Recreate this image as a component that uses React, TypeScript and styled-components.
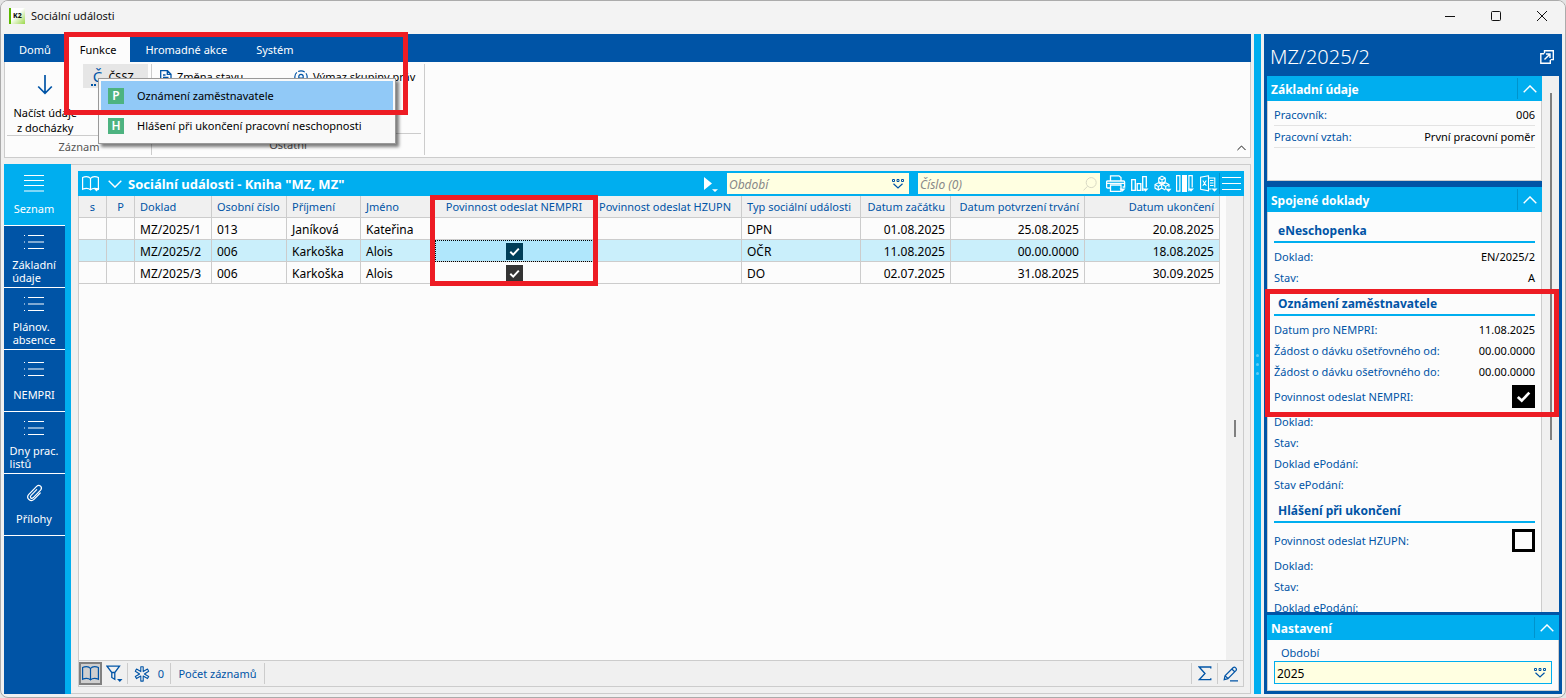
import React from "react";
import styled, { createGlobalStyle, css } from "styled-components";

const NAVY = "#0054a6";
const CYAN = "#00aeef";
const PAPER = "#fcfcfc";
const CHROME = "#f0f0f0";
const LINE = "#cccccc";
const CREAM = "#ffffe1";
const RED = "#ed1c24";

const Global = createGlobalStyle`
  *, *::before, *::after { box-sizing: border-box; }
  body { margin: 0; background: #e4e4e4; }
  body, button, input { font-family: "Noto Sans", "Open Sans", sans-serif; font-size: 11px; line-height: 16px; }
  button { margin: 0; padding: 0; border: 0; background: none; color: inherit; cursor: default; }
  svg { display: block; fill: none; stroke: currentColor; flex: none; }
`;

/* ---------- window frame ---------- */

const Window = styled.div`
  display: flex;
  flex-direction: column;
  height: 100vh;
  border: 1px solid #ababab;
  border-radius: 8px;
  background: ${CHROME};
  overflow: hidden;
`;

const TitleBar = styled.header`
  display: flex;
  align-items: center;
  flex: none;
  height: 33px;
  padding: 0 0 4px 8px;
  background: #f3f3f3;
  color: #111;
`;

const AppTitle = styled.h1`
  flex: 1;
  margin: 0 0 0 6px;
  font-size: 11px;
  font-weight: 400;
`;

const WindowButton = styled.button`
  display: grid;
  place-items: center;
  width: 46px;
  height: 28px;
`;

const Body = styled.div`
  display: flex;
  flex: 1;
  gap: 3px;
  min-height: 0;
  padding: 0 3px 3px;
`;

const Main = styled.div`
  display: flex;
  flex-direction: column;
  flex: 1;
  min-width: 0;
`;

const Splitter = styled.div`
  display: flex;
  flex-direction: column;
  align-items: center;
  justify-content: center;
  gap: 6px;
  width: 7px;
  background: ${CYAN};
`;

const SplitterDot = styled.span`
  width: 3px;
  height: 3px;
  border-radius: 50%;
  background: #5fcbf5;
`;

const Highlight = styled.div`
  position: absolute;
  z-index: 5;
  border: 5px solid ${RED};
  pointer-events: none;
`;

/* ---------- ribbon ---------- */

const Ribbon = styled.section`
  position: relative;
  flex: none;
`;

const RibbonMark = styled(Highlight)`
  top: -2px;
  left: 60px;
  width: 344px;
  height: 83px;
`;

const Tabs = styled.nav`
  display: flex;
  height: 28px;
  background: ${NAVY};
  color: #fff;
`;

const Tab = styled.button<{ $active?: boolean }>`
  padding: 4px 14px 0 15px;
  ${(p) => p.$active && css`background: ${PAPER}; color: #000;`}
`;

const RibbonBody = styled.div`
  display: flex;
  height: 96px;
  border: 1px solid ${LINE};
  border-top: 0;
  background: ${PAPER};
  padding: 2px 0 2px 2px;
`;

const RibbonGroup = styled.div<{ $width: number }>`
  display: flex;
  flex-direction: column;
  flex: none;
  width: ${(p) => p.$width}px;
  border-right: 1px solid ${LINE};
`;

const GroupTools = styled.div`
  display: flex;
  align-items: flex-start;
  flex: 1;
  margin: 0 3px 0 0;
  border-bottom: 1px solid ${LINE};
`;

const GroupLabel = styled.div`
  height: 21px;
  color: #555;
  line-height: 21px;
  text-align: center;
`;

const BigTool = styled.button`
  display: flex;
  flex-direction: column;
  align-items: center;
  gap: 10px;
  width: 77px;
  padding-top: 11px;
  line-height: 15px;
  white-space: nowrap;
`;

const SmallTool = styled.button<{ $hot?: boolean; $width: number }>`
  display: flex;
  align-items: center;
  gap: 5px;
  width: ${(p) => p.$width}px;
  height: 24px;
  padding: 1px 0 0 8px;
  background: ${(p) => (p.$hot ? "#e6e6e6" : "none")};
  white-space: nowrap;
`;

const LetterIcon = styled.span`
  width: 12px;
  border-bottom: 2px dotted ${NAVY};
  color: ${NAVY};
  font-size: 15px;
  line-height: 16px;
`;

const CollapseButton = styled.button`
  align-self: flex-end;
  margin: 0 4px 4px auto;
`;

const Menu = styled.ul`
  position: absolute;
  top: 44px;
  left: 94px;
  z-index: 4;
  width: 298px;
  margin: 0;
  padding: 2px;
  border: 1px solid #999;
  background: #f9f9f9;
  box-shadow: 3px 3px 3px rgba(0, 0, 0, 0.5);
  list-style: none;
`;

const MenuItem = styled.button<{ $active?: boolean }>`
  display: flex;
  align-items: center;
  gap: 13px;
  width: 100%;
  height: 30px;
  padding-left: 7px;
  background: ${(p) => (p.$active ? "#91c9f7" : "none")};
  white-space: nowrap;
`;

const MenuBadge = styled.span`
  width: 16px;
  height: 16px;
  background: #4db380;
  color: #fff;
  font-size: 12px;
  font-weight: 600;
  text-align: center;
`;

/* ---------- page with sidebar ---------- */

const Page = styled.div`
  display: flex;
  flex: 1;
  min-height: 0;
  margin-top: 6px;
`;

const Sidebar = styled.nav`
  flex: none;
  width: 67px;
  border-right: 6px solid ${CYAN};
  background: ${NAVY};
`;

const SideItem = styled.button<{ $active?: boolean; $lines: number }>`
  display: grid;
  grid-template-rows: 1fr auto;
  place-items: center;
  width: 61px;
  height: 62px;
  padding: 0 1px ${(p) => (p.$lines > 1 ? 3 : 10)}px 0;
  border-bottom: 1px solid #fff;
  background: ${(p) => (p.$active ? CYAN : NAVY)};
  color: #fff;
  line-height: 13px;
  text-align: left;
  white-space: pre;
`;

const Workspace = styled.main`
  display: flex;
  flex-direction: column;
  flex: 1;
  min-width: 0;
  padding: 6px 6px 6px 7px;
  border: 1px solid ${LINE};
  border-left: 0;
`;

const GridBar = styled.div`
  display: flex;
  align-items: center;
  flex: none;
  height: 25px;
  padding: 0 2px 0 4px;
  background: ${CYAN};
  color: #fff;
`;

const GridTitle = styled.h2`
  flex: 1;
  margin: 0 0 0 6px;
  font-size: 13px;
  font-weight: 700;
  white-space: nowrap;
`;

const BarButton = styled.button<{ $width: number }>`
  display: grid;
  place-items: center start;
  width: ${(p) => p.$width}px;
  height: 25px;
`;

const FilterBox = styled.label`
  display: flex;
  align-items: center;
  width: 182px;
  height: 21px;
  margin-right: 9px;
  padding-right: 5px;
  background: ${CREAM};
  & + & { margin-right: 6px; padding-right: 3px; }
`;

const FieldInput = styled.input`
  flex: 1;
  min-width: 0;
  height: 100%;
  padding: 2px 2px 0;
  border: 0;
  outline: 0;
  background: transparent;
  color: #000;
  font-size: 12px;
  &::placeholder { color: #888; font-style: italic; opacity: 1; }
`;

const LookupButton = styled.button<{ $faint?: boolean }>`
  color: ${(p) => (p.$faint ? "#d8d8c4" : NAVY)};
`;

const BarDivider = styled.span`
  width: 1px;
  height: 21px;
  margin-right: 2px;
  background: #0093cc;
`;

const GridArea = styled.div`
  display: flex;
  flex: 1;
  min-height: 0;
  border: 1px solid ${LINE};
  border-top: 0;
  background: ${PAPER};
`;

const TableWrap = styled.div`
  flex: 1;
  min-width: 0;
`;

const ScrollTrack = styled.div`
  display: flex;
  justify-content: center;
  align-items: center;
  width: 17px;
  background: ${CHROME};
`;

const GridThumb = styled.span`
  width: 2px;
  height: 17px;
  background: #808080;
`;

const Table = styled.table`
  width: 1141px;
  border-collapse: separate;
  border-spacing: 0;
  table-layout: fixed;
`;

const cell = css<{ $align?: string }>`
  height: 22px;
  padding: 1px 5px 0;
  border-right: 1px solid ${LINE};
  border-bottom: 1px solid ${LINE};
  text-align: ${(p) => p.$align || "left"};
  white-space: nowrap;
`;

const Th = styled.th<{ $align?: string }>`
  ${cell}
  position: relative;
  background: ${CHROME};
  color: ${NAVY};
  font-weight: 400;
`;

const Td = styled.td<{ $align?: string; $check?: boolean; $focus?: boolean }>`
  ${cell}
  padding-top: ${(p) => (p.$check ? 1 : 3)}px;
  font-size: 12px;
  ${(p) => p.$focus && css`
    background: #b0e7fc;
    outline: 1px dotted #000;
    outline-offset: -1px;
  `}
`;

const Tr = styled.tr<{ $selected?: boolean }>`
  background: ${(p) => (p.$selected ? "#caeffb" : PAPER)};
`;

const ColumnMark = styled(Highlight)`
  top: -1px;
  left: -5px;
  width: 168px;
  height: 91px;
`;

const StatusBar = styled.div`
  display: flex;
  align-items: center;
  flex: none;
  height: 26px;
  border: 1px solid ${LINE};
  border-top: 0;
  color: ${NAVY};
`;

const StatusButton = styled.button<{ $pressed?: boolean; $width: number }>`
  display: flex;
  align-items: center;
  justify-content: center;
  gap: 8px;
  width: ${(p) => p.$width}px;
  height: 23px;
  white-space: nowrap;
  ${(p) => p.$pressed && css`border: 2px solid #808080; background: #cfcfcf;`}
`;

const StatusDivider = styled.span`
  width: 1px;
  height: 21px;
  background: ${LINE};
`;

const Spacer = styled.span`
  flex: 1;
`;

/* ---------- check boxes ---------- */

const CheckFrame = styled.span<{ $size: number }>`
  display: inline-grid;
  width: ${(p) => p.$size}px;
  height: ${(p) => p.$size}px;
  vertical-align: top;
  > * { grid-area: 1 / 1; place-self: center; }
  svg { color: #fff; pointer-events: none; }
`;

const CheckInput = styled.input<{ $color: string }>`
  appearance: none;
  width: 100%;
  height: 100%;
  margin: 0;
  border: 3px solid ${(p) => p.$color};
  background: ${PAPER};
  &:checked { background: ${(p) => p.$color}; }
`;

/* ---------- detail panel ---------- */

const Panel = styled.aside`
  position: relative;
  display: flex;
  flex-direction: column;
  flex: none;
  width: 298px;
  padding: 0 3px 3px;
  background: ${NAVY};
`;

const PanelMark = styled(Highlight)`
  top: 255px;
  left: 1px;
  right: 3px;
  height: 128px;
`;

const PanelHead = styled.div`
  display: flex;
  align-items: center;
  justify-content: space-between;
  flex: none;
  height: 42px;
  padding: 4px 5px 0 3px;
  color: #fff;
`;

const PanelTitle = styled.h2`
  margin: 0;
  font-size: 20px;
  font-weight: 300;
  line-height: 24px;
`;

const PanelScroll = styled.div`
  display: flex;
  flex: 1;
  min-height: 0;
  overflow: hidden;
`;

const Sections = styled.div`
  display: flex;
  flex-direction: column;
  flex: 1;
  gap: 6px;
  min-width: 0;
`;

const PanelTrack = styled.div`
  display: flex;
  justify-content: center;
  width: 17px;
  padding-top: 17px;
  background: ${CHROME};
`;

const PanelThumb = styled.span`
  width: 2px;
  height: 347px;
  background: #808080;
`;

const SectionHead = styled.div`
  display: flex;
  align-items: center;
  height: 25px;
  padding: 0 0 0 4px;
  background: ${CYAN};
  color: #fff;
`;

const SectionTitle = styled.h3`
  flex: 1;
  margin: 0;
  font-size: 12px;
  font-weight: 700;
  line-height: 18px;
  padding-top: 2px;
`;

const FoldButton = styled.button`
  display: grid;
  place-items: center;
  width: 25px;
  height: 21px;
  border-left: 1px solid #0093cc;
`;

const SectionBody = styled.div<{ $min?: number }>`
  min-height: ${(p) => p.$min || 0}px;
  padding: 3px 6px 0;
  border: 1px solid ${LINE};
  border-top: 0;
  background: ${PAPER};
`;

const GroupTitle = styled.h4`
  height: 28px;
  margin: 0 0 3px;
  padding-left: 4px;
  border-bottom: 2px solid ${CYAN};
  color: ${NAVY};
  font-size: 12px;
  font-weight: 700;
  line-height: 32px;
`;

const Row = styled.div<{ $height: number; $ruled?: boolean }>`
  display: flex;
  align-items: center;
  justify-content: space-between;
  height: ${(p) => p.$height}px;
  border-bottom: ${(p) => (p.$ruled ? "1px solid #e3e3e3" : "0")};
  white-space: nowrap;
`;

const RowLabel = styled.label`
  color: ${NAVY};
`;

const RowValue = styled.span`
  color: #000;
`;

const Settings = styled.section`
  flex: none;
  margin-top: 3px;
`;

const SettingsBody = styled.div`
  display: flex;
  flex-direction: column;
  height: 51px;
  padding: 5px 6px 6px;
  border: 1px solid ${LINE};
  border-top: 0;
  background: ${PAPER};
`;

const SettingsLabel = styled.label`
  padding-left: 7px;
  color: ${NAVY};
`;

const SettingsField = styled.div`
  display: flex;
  align-items: center;
  height: 23px;
  padding-right: 5px;
  border: 1px solid ${CYAN};
  background: ${CREAM};
`;

/* ---------- icons ---------- */

const CheckMark = ({ size }: { size: number }) => (
  <svg width={size} height={size} viewBox="0 0 17 17" strokeWidth="2">
    <path d="M4.300 8.800 7.200 11.600 12.800 5.600" />
  </svg>
);

const Chevron = ({ up, w = 14, h = 8 }: { up?: boolean; w?: number; h?: number }) => (
  <svg width={w} height={h} viewBox="0 0 14 8" strokeWidth="1.4">
    <path d={up ? "M.7 7.2 7 .9l6.3 6.3" : "M.7.8 7 7.1 13.3.8"} />
  </svg>
);

const Lookup = () => (
  <svg width="12" height="10" viewBox="0 0 12 10">
    <path d="M.5.5h2v2h-2zM5 .5h2v2H5zM9.500.5h2v2h-2z" />
    <path d="M1.500 4.800 6 9l4.500-4.200" strokeWidth="1.2" />
  </svg>
);

const Book = ({ drop }: { drop?: boolean }) => (
  <svg width="18" height="17" viewBox="0 0 18 17" strokeWidth="1.2">
    <path d="M8.500 3.500C7.500 2.200 6 1.600 4.500 1.600c-1.400 0-2.700.3-3.900 1v11.600c1.200-.6 2.500-.9 3.900-.9 1.600 0 3 .5 4 1.500 1-1 2.400-1.500 4-1.500 1.400 0 2.700.3 3.900.9V2.600c-1.200-.7-2.500-1-3.900-1-1.500 0-3 .6-4 1.900zM8.500 3.500v11" />
    {drop && <path d="M11.500 13.300h6l-3 3.200z" fill="currentColor" stroke="none" />}
  </svg>
);

const Lines = () => (
  <svg width="20" height="17" viewBox="0 0 20 17">
    <path d="M0 .5h20M0 5.500h20M0 10.500h20M0 16h20" />
  </svg>
);

const List = () => (
  <svg width="20" height="14" viewBox="0 0 20 14">
    <path d="M0 .5h1M4 .5h16M0 7h1M4 7h16M0 13.500h1M4 13.500h16" strokeWidth="1.2" />
  </svg>
);

const Clip = () => (
  <svg width="20" height="20" viewBox="0 0 20 20" strokeWidth="1.200" strokeLinecap="round">
    <path d="M16.200 10 10 16.300c-3.200 3.200-8.300-1-5.400-4.700l8-8.200c2.800-2.700 6.400.9 4 3.700l-7.500 7.700c-1.700 1.500-3.600-.4-2.200-2.100l5.800-6" />
  </svg>
);

const Corner = () => <path d="M13.500 13.500h6l-3 3.200z" fill="currentColor" stroke="none" />;

const Printer = () => (
  <svg width="20" height="18" viewBox="0 0 20 18" strokeWidth="1.300">
    <path d="M4.500 6V.8h8.500L15 2.600V6M4.500 13H1.600c-.6 0-1-.4-1-1V7c0-.6.4-1 1-1h16c.6 0 1 .4 1 1v5h-2M4.500 10h10.500v6.300H4.500zM1 8.300h17.500" />
    <Corner />
  </svg>
);

const Chart = () => (
  <svg width="18" height="18" viewBox="0 0 18 18" strokeWidth="1.300">
    <path d="M.7 4.700h3.600v10.600H.7zM6.200 8.700h3.600v6.600H6.200zM15.300 12.500V1.700h-3.600v13.600h1" />
    <path d="M11.500 13.500h6l-3 3.200z" fill="currentColor" stroke="none" />
  </svg>
);

const Cubes = () => (
  <svg width="18" height="18" viewBox="0 0 18 18" strokeWidth="1.100">
    <path d="M8 1.200 11.300 3v3.600L8 8.400 4.700 6.600V3zM4.700 3 8 4.800 11.300 3M8 4.800v3.600M4.300 7.800l3.400 1.800v3.500l-3.400 1.900L1 13.100V9.600zM1 9.600l3.300 1.800 3.400-1.800M4.300 11.400V15M11.700 7.800 15 9.600v2.600M7.700 13.100l3.500 1.900M8.300 9.600l3.400-1.800M8.300 9.600l3.400 1.800L15 9.600M11.700 11.400v3" />
    <path d="M11.500 13.700h6l-3 3.200z" fill="currentColor" stroke="none" />
  </svg>
);

const Columns = () => (
  <svg width="18" height="18" viewBox="0 0 18 18" strokeWidth="1.200">
    <path d="M.6.700h3.300v15.500H.6zM16.200 12.500V.7h-3.300v15.500" />
    <path d="M6 0h5v17H6zM12 13.500h6l-3 3.200z" fill="currentColor" stroke="none" />
  </svg>
);

const Sheet = () => (
  <svg width="18" height="18" viewBox="0 0 18 18" strokeWidth="1.100">
    <path d="M8.500.800.600 2.300v11.900l7.900 1.600zM8.500 3h6.300v9.500M8.500 14h3M10 5.500h3.500M10 8h3.500M10 10.500h3.500M2.800 5.500l3.500 5.300M6.300 5.500l-3.500 5.300" />
    <path d="M11.500 13.500h6l-3 3.200z" fill="currentColor" stroke="none" />
  </svg>
);

const Burger = () => (
  <svg width="19" height="13" viewBox="0 0 19 13">
    <path d="M0 .5h19M0 6.500h19M0 12.500h19" />
  </svg>
);

const Play = () => (
  <svg width="14" height="17" viewBox="0 0 14 17">
    <path d="M0 2l8 6.500L0 15zM8 14.300h6L11 17z" fill="currentColor" stroke="none" />
  </svg>
);

const Magnifier = () => (
  <svg width="14" height="14" viewBox="0 0 14 14">
    <circle cx="8.200" cy="5.600" r="5" />
    <path d="M4.500 9.300.500 13.400" />
  </svg>
);

const Funnel = () => (
  <svg width="17" height="17" viewBox="0 0 17 17" strokeWidth="1.300">
    <path d="M1 1.200h12.500L8.800 7.500v6.800l-3-1.800v-5zM5.800 7.500h3" />
    <path d="M11 14h5.500l-2.700 3z" fill="currentColor" stroke="none" />
  </svg>
);

const Asterisk = () => (
  <svg width="16" height="16" viewBox="0 0 16 16" strokeWidth="1.100" strokeLinejoin="round">
    <path d="M6.800.7h2.400v4.900l4.300-2.500 1.200 2.100L10.400 8l4.300 2.500-1.200 2.100-4.300-2.500v5H6.800v-5l-4.300 2.500-1.200-2.100L5.600 8 1.300 5.200l1.200-2.100 4.300 2.500z" />
  </svg>
);

const Sigma = () => (
  <svg width="14" height="15" viewBox="0 0 14 15" strokeWidth="1.300">
    <path d="M12.800 2.500V1H1.200L7 7.500 1.200 13.700h11.600v-1.500" />
  </svg>
);

const Pencil = () => (
  <svg width="16" height="16" viewBox="0 0 16 16" strokeWidth="1.200">
    <path d="M1.200 13.700 2 9.800 10.300 1.500c1.500-1.200 4 1.200 2.800 2.800L4.900 12.600zM8.800 3l2.900 2.800M2.200 9.800l2.700 2.700M7 14.800h8" />
  </svg>
);

const PopOut = () => (
  <svg width="14" height="14" viewBox="0 0 14 14" strokeWidth="1.400">
    <path d="M4 3.700H.8v9.500h9.500V10M4.500 3.500V.800h8.800v8.800H10.500M4.500 9.500l5.300-5.300M6 4h4v4" />
  </svg>
);

const DownArrow = () => (
  <svg width="16" height="20" viewBox="0 0 16 20" strokeWidth="1.700" color={NAVY}>
    <path d="M8 0v18M1.200 11.500 8 18.300l6.800-6.800" />
  </svg>
);

const DocIcon = () => (
  <svg width="12" height="14" viewBox="0 0 12 14" strokeWidth="1.300" color={NAVY}>
    <path d="M.7.700h6.800L11 4.200v9H.7zM7.300.7v3.700H11M3 5h2.500M3 7.500h5.500M3 10h5.500" />
  </svg>
);

const RightsIcon = () => (
  <svg width="14" height="14" viewBox="0 0 14 14" strokeWidth="1.200" color={NAVY}>
    <circle cx="7" cy="7" r="6.200" strokeDasharray="7 1.500" />
    <path d="M4.800 10V6.500a2.200 2.200 0 0 1 4.400 0V10M4.800 8h4.400" />
  </svg>
);

const AppLogo = () => (
  <svg width="16" height="16" viewBox="0 0 16 16">
    <defs>
      <linearGradient id="logo" x1="0" y1="0" x2="1" y2="1">
        <stop offset=".45" stopColor="#fff" />
        <stop offset="1" stopColor="#9bd84a" />
      </linearGradient>
    </defs>
    <g stroke="none">
      <path d="M0 0h16v16H0z" fill="url(#logo)" />
      <path d="M0 0h2v16H0z" fill="#5cb800" />
      <text x="4" y="10" fill="#111" fontSize="7" fontWeight="800">K2</text>
    </g>
  </svg>
);

/* ---------- data ---------- */

const columns = [
  { label: "s", width: 28, align: "center" },
  { label: "P", width: 28, align: "center" },
  { label: "Doklad", width: 77 },
  { label: "Osobní číslo", width: 75 },
  { label: "Příjmení", width: 74 },
  { label: "Jméno", width: 74 },
  { label: "Povinnost odeslat NEMPRI", width: 159, align: "center", marked: true },
  { label: "Povinnost odeslat HZUPN", width: 148 },
  { label: "Typ sociální události", width: 119 },
  { label: "Datum začátku", width: 90, align: "right" },
  { label: "Datum potvrzení trvání", width: 134, align: "right" },
  { label: "Datum ukončení", width: 135, align: "right" },
];

const records = [
  { doc: "MZ/2025/1", id: "013", last: "Janíková", first: "Kateřina", send: false, type: "DPN", from: "01.08.2025", conf: "25.08.2025", to: "20.08.2025" },
  { doc: "MZ/2025/2", id: "006", last: "Karkoška", first: "Alois", send: true, type: "OČR", from: "11.08.2025", conf: "00.00.0000", to: "18.08.2025", selected: true },
  { doc: "MZ/2025/3", id: "006", last: "Karkoška", first: "Alois", send: true, type: "DO", from: "02.07.2025", conf: "31.08.2025", to: "30.09.2025" },
];

const sideItems = [
  { label: "Seznam", icon: <Lines />, active: true },
  { label: "Základní\núdaje", icon: <List /> },
  { label: "Plánov.\nabsence", icon: <List /> },
  { label: "NEMPRI", icon: <List /> },
  { label: "Dny prac.\nlistů", icon: <List /> },
  { label: "Přílohy", icon: <Clip /> },
];

const Check = ({ id, label, checked, size, color }: { id?: string; label?: string; checked: boolean; size: number; color: string }) => (
  <CheckFrame $size={size}>
    <CheckInput type="checkbox" id={id} aria-label={label} defaultChecked={checked} $color={color} />
    {checked && <CheckMark size={size} />}
  </CheckFrame>
);

const Info = ({ label, value, height = 21, ruled }: { label: string; value?: string; height?: number; ruled?: boolean }) => (
  <Row $height={height} $ruled={ruled}>
    <RowLabel as="span">{label}</RowLabel>
    <RowValue>{value}</RowValue>
  </Row>
);

const InfoCheck = ({ id, label, checked }: { id: string; label: string; checked: boolean }) => (
  <Row $height={29}>
    <RowLabel htmlFor={id}>{label}</RowLabel>
    <Check id={id} checked={checked} size={23} color="#000" />
  </Row>
);

const Head = ({ title }: { title: string }) => (
  <SectionHead>
    <SectionTitle>{title}</SectionTitle>
    <FoldButton aria-label="Sbalit"><Chevron up /></FoldButton>
  </SectionHead>
);

export default function App() {
  return (
    <>
      <Global />
      <Window>
        <TitleBar>
          <AppLogo />
          <AppTitle>Sociální události</AppTitle>
          <WindowButton aria-label="Minimalizovat">
            <svg width="10" height="10" viewBox="0 0 10 10"><path d="M0 5.500h10" /></svg>
          </WindowButton>
          <WindowButton aria-label="Maximalizovat">
            <svg width="10" height="10" viewBox="0 0 10 10"><rect x=".5" y=".5" width="9" height="9" rx="1" /></svg>
          </WindowButton>
          <WindowButton aria-label="Zavřít">
            <svg width="10" height="10" viewBox="0 0 10 10"><path d="M0 0l10 10M10 0 0 10" /></svg>
          </WindowButton>
        </TitleBar>

        <Body>
          <Main>
            <Ribbon>
              <Tabs>
                <Tab>Domů</Tab>
                <Tab $active>Funkce</Tab>
                <Tab>Hromadné akce</Tab>
                <Tab>Systém</Tab>
              </Tabs>
              <RibbonBody>
                <RibbonGroup $width={145}>
                  <GroupTools>
                    <BigTool>
                      <DownArrow />
                      <span>Načíst údaje<br />z docházky</span>
                    </BigTool>
                    <SmallTool $hot $width={65}><LetterIcon>Č</LetterIcon>ČSSZ</SmallTool>
                  </GroupTools>
                  <GroupLabel>Záznam</GroupLabel>
                </RibbonGroup>
                <RibbonGroup $width={273}>
                  <GroupTools>
                    <SmallTool $width={134}><DocIcon />Změna stavu</SmallTool>
                    <SmallTool $width={134}><RightsIcon />Výmaz skupiny práv</SmallTool>
                  </GroupTools>
                  <GroupLabel>Ostatní</GroupLabel>
                </RibbonGroup>
                <CollapseButton aria-label="Sbalit pás karet"><Chevron up w={9} h={6} /></CollapseButton>
              </RibbonBody>
              <Menu>
                <li><MenuItem $active><MenuBadge>P</MenuBadge>Oznámení zaměstnavatele</MenuItem></li>
                <li><MenuItem><MenuBadge>H</MenuBadge>Hlášení při ukončení pracovní neschopnosti</MenuItem></li>
              </Menu>
              <RibbonMark />
            </Ribbon>

            <Page>
              <Sidebar>
                {sideItems.map((s) => (
                  <SideItem key={s.label} $active={s.active} $lines={s.label.split("\n").length}>
                    {s.icon}
                    <span>{s.label}</span>
                  </SideItem>
                ))}
              </Sidebar>

              <Workspace>
                <GridBar>
                  <BarButton $width={26} aria-label="Kniha"><Book drop /></BarButton>
                  <BarButton $width={14} aria-label="Rozbalit"><Chevron /></BarButton>
                  <GridTitle>Sociální události - Kniha "MZ, MZ"</GridTitle>
                  <BarButton $width={23} aria-label="Spustit"><Play /></BarButton>
                  <FilterBox>
                    <FieldInput placeholder="Období" aria-label="Období" />
                    <LookupButton aria-label="Vybrat období"><Lookup /></LookupButton>
                  </FilterBox>
                  <FilterBox>
                    <FieldInput placeholder="Číslo (0)" aria-label="Číslo" />
                    <LookupButton $faint aria-label="Hledat"><Magnifier /></LookupButton>
                  </FilterBox>
                  <BarButton $width={25} aria-label="Tisk"><Printer /></BarButton>
                  <BarButton $width={23} aria-label="Graf"><Chart /></BarButton>
                  <BarButton $width={22} aria-label="Kostky"><Cubes /></BarButton>
                  <BarButton $width={24} aria-label="Sloupce"><Columns /></BarButton>
                  <BarButton $width={19} aria-label="Excel"><Sheet /></BarButton>
                  <BarDivider />
                  <BarButton $width={20} aria-label="Nabídka"><Burger /></BarButton>
                </GridBar>

                <GridArea>
                  <TableWrap>
                    <Table>
                      <colgroup>
                        {columns.map((c) => <col key={c.label} width={c.width} />)}
                      </colgroup>
                      <thead>
                        <tr>
                          {columns.map((c) => (
                            <Th key={c.label} $align={c.align}>
                              {c.label}
                              {c.marked && <ColumnMark />}
                            </Th>
                          ))}
                        </tr>
                      </thead>
                      <tbody>
                        {records.map((r) => (
                          <Tr key={r.doc} $selected={r.selected}>
                            <Td />
                            <Td />
                            <Td>{r.doc}</Td>
                            <Td>{r.id}</Td>
                            <Td>{r.last}</Td>
                            <Td>{r.first}</Td>
                            <Td $align="center" $check $focus={r.selected}>
                              {r.send && <Check checked size={17} color={r.selected ? "#003e58" : "#333"} label="Povinnost odeslat NEMPRI" />}
                            </Td>
                            <Td />
                            <Td>{r.type}</Td>
                            <Td $align="right">{r.from}</Td>
                            <Td $align="right">{r.conf}</Td>
                            <Td $align="right">{r.to}</Td>
                          </Tr>
                        ))}
                      </tbody>
                    </Table>
                  </TableWrap>
                  <ScrollTrack><GridThumb /></ScrollTrack>
                </GridArea>

                <StatusBar>
                  <StatusButton $pressed $width={23} aria-label="Kniha"><Book /></StatusButton>
                  <StatusButton $width={25} aria-label="Filtr"><Funnel /></StatusButton>
                  <StatusDivider />
                  <StatusButton $width={42}><Asterisk />0</StatusButton>
                  <StatusDivider />
                  <StatusButton $width={93}>Počet záznamů</StatusButton>
                  <StatusDivider />
                  <Spacer />
                  <StatusDivider />
                  <StatusButton $width={25} aria-label="Součet"><Sigma /></StatusButton>
                  <StatusDivider />
                  <StatusButton $width={25} aria-label="Upravit"><Pencil /></StatusButton>
                </StatusBar>
              </Workspace>
            </Page>
          </Main>

          <Splitter><SplitterDot /><SplitterDot /><SplitterDot /></Splitter>

          <Panel>
            <PanelHead>
              <PanelTitle>MZ/2025/2</PanelTitle>
              <button aria-label="Otevřít v novém okně"><PopOut /></button>
            </PanelHead>
            <PanelScroll>
              <Sections>
                <section>
                  <Head title="Základní údaje" />
                  <SectionBody $min={80}>
                    <Info label="Pracovník:" value="006" height={22} ruled />
                    <Info label="Pracovní vztah:" value="První pracovní poměr" height={22} ruled />
                  </SectionBody>
                </section>
                <section>
                  <Head title="Spojené doklady" />
                  <SectionBody>
                    <GroupTitle>eNeschopenka</GroupTitle>
                    <Info label="Doklad:" value="EN/2025/2" />
                    <Info label="Stav:" value="A" />
                    <GroupTitle>Oznámení zaměstnavatele</GroupTitle>
                    <Info label="Datum pro NEMPRI:" value="11.08.2025" />
                    <Info label="Žádost o dávku ošetřovného od:" value="00.00.0000" />
                    <Info label="Žádost o dávku ošetřovného do:" value="00.00.0000" />
                    <InfoCheck id="nempri" label="Povinnost odeslat NEMPRI:" checked />
                    <Info label="Doklad:" />
                    <Info label="Stav:" />
                    <Info label="Doklad ePodání:" />
                    <Info label="Stav ePodání:" />
                    <GroupTitle>Hlášení při ukončení</GroupTitle>
                    <InfoCheck id="hzupn" label="Povinnost odeslat HZUPN:" checked={false} />
                    <Info label="Doklad:" />
                    <Info label="Stav:" />
                    <Info label="Doklad ePodání:" />
                  </SectionBody>
                </section>
              </Sections>
              <PanelTrack><PanelThumb /></PanelTrack>
            </PanelScroll>
            <Settings>
              <Head title="Nastavení" />
              <SettingsBody>
                <SettingsLabel htmlFor="period">Období</SettingsLabel>
                <SettingsField>
                  <FieldInput id="period" defaultValue="2025" />
                  <LookupButton aria-label="Vybrat období"><Lookup /></LookupButton>
                </SettingsField>
              </SettingsBody>
            </Settings>
            <PanelMark />
          </Panel>
        </Body>
      </Window>
    </>
  );
}
